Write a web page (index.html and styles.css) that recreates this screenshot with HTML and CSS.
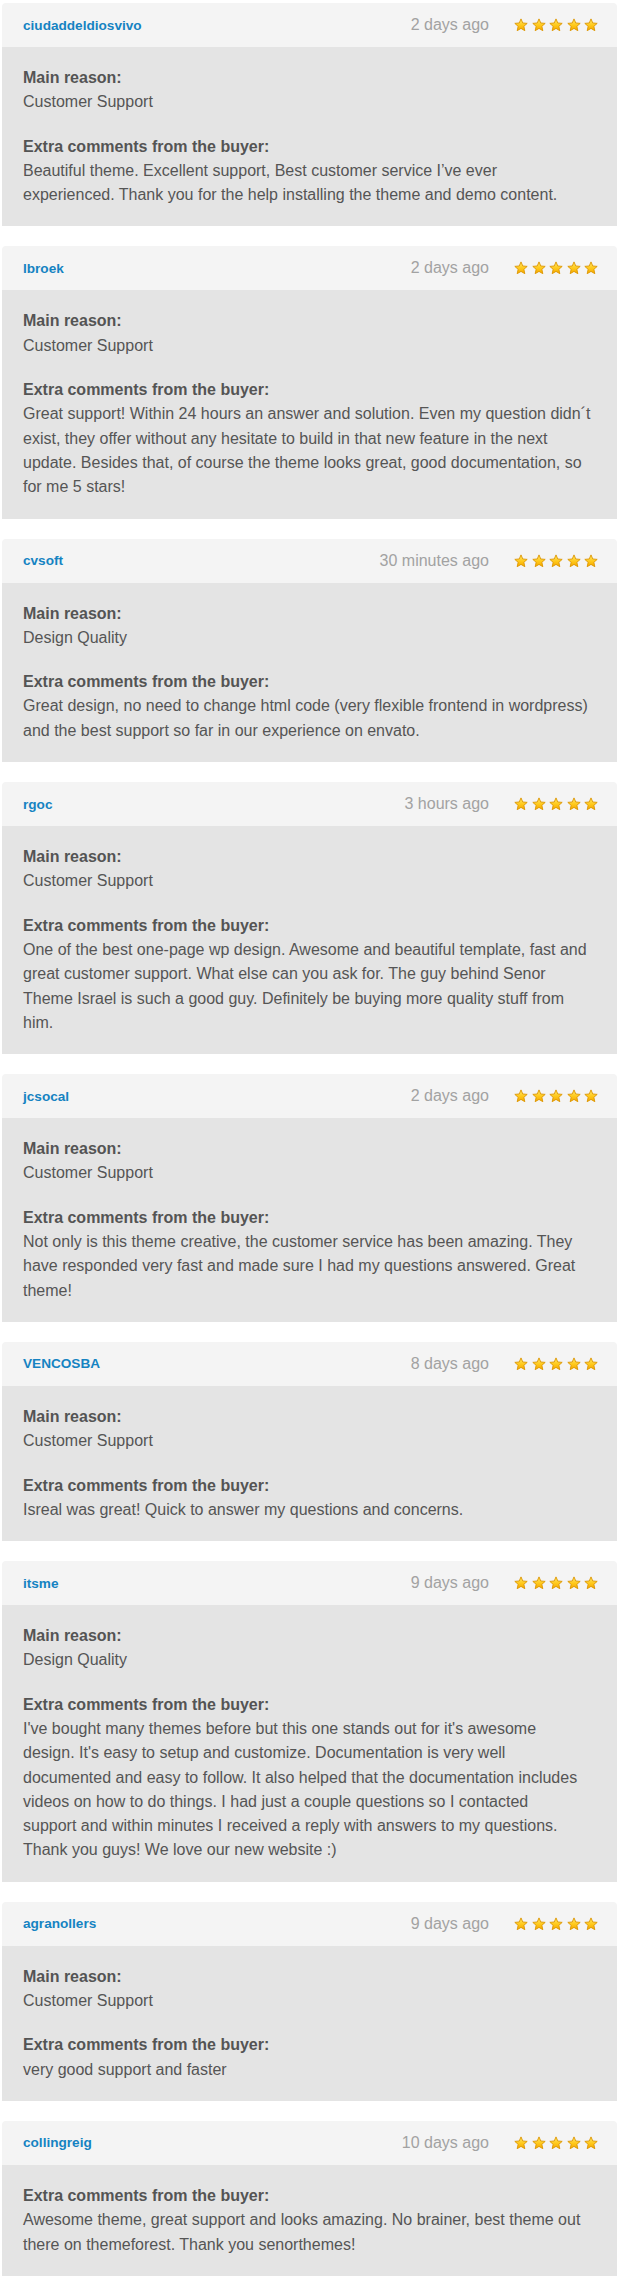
FILE: index.html
```html
<!DOCTYPE html>
<html lang="en">
<head>
<meta charset="utf-8">
<title>Reviews</title>
<link rel="stylesheet" href="styles.css">
</head>
<body>
<svg class="defs" width="0" height="0" aria-hidden="true">
  <defs>
    <linearGradient id="starfill" x1="0" y1="0" x2="0" y2="1">
      <stop offset="0" stop-color="#ffe866"/>
      <stop offset="0.55" stop-color="#ffc81a"/>
      <stop offset="1" stop-color="#f5a800"/>
    </linearGradient>
    <symbol id="star" viewBox="0 0 14 14">
      <path d="M7 0.9 L8.76 4.97 L13.18 5.39 L9.85 8.33 L10.82 12.66 L7 10.4 L3.18 12.66 L4.15 8.33 L0.82 5.39 L5.24 4.97 Z" fill="url(#starfill)" stroke="#dc9500" stroke-width="0.9" stroke-linejoin="round"/>
    </symbol>
  </defs>
</svg>

<main class="reviews">

  <article class="review">
    <header class="review-head">
      <a class="user">ciudaddeldiosvivo</a>
      <span class="date">2 days ago</span>
      <span class="stars"><svg class="star"><use href="#star"/></svg><svg class="star"><use href="#star"/></svg><svg class="star"><use href="#star"/></svg><svg class="star"><use href="#star"/></svg><svg class="star"><use href="#star"/></svg></span>
    </header>
    <div class="review-body">
      <div class="block">
        <div class="label">Main reason:</div>
        <div class="text">Customer Support</div>
      </div>
      <div class="block">
        <div class="label">Extra comments from the buyer:</div>
        <div class="text">Beautiful theme. Excellent support, Best customer service I’ve ever<br>experienced. Thank you for the help installing the theme and demo content.</div>
      </div>
    </div>
  </article>

  <article class="review">
    <header class="review-head">
      <a class="user">lbroek</a>
      <span class="date">2 days ago</span>
      <span class="stars"><svg class="star"><use href="#star"/></svg><svg class="star"><use href="#star"/></svg><svg class="star"><use href="#star"/></svg><svg class="star"><use href="#star"/></svg><svg class="star"><use href="#star"/></svg></span>
    </header>
    <div class="review-body">
      <div class="block">
        <div class="label">Main reason:</div>
        <div class="text">Customer Support</div>
      </div>
      <div class="block">
        <div class="label">Extra comments from the buyer:</div>
        <div class="text">Great support! Within 24 hours an answer and solution. Even my question didn´t<br>exist, they offer without any hesitate to build in that new feature in the next<br>update. Besides that, of course the theme looks great, good documentation, so<br>for me 5 stars!</div>
      </div>
    </div>
  </article>

  <article class="review">
    <header class="review-head">
      <a class="user">cvsoft</a>
      <span class="date">30 minutes ago</span>
      <span class="stars"><svg class="star"><use href="#star"/></svg><svg class="star"><use href="#star"/></svg><svg class="star"><use href="#star"/></svg><svg class="star"><use href="#star"/></svg><svg class="star"><use href="#star"/></svg></span>
    </header>
    <div class="review-body">
      <div class="block">
        <div class="label">Main reason:</div>
        <div class="text">Design Quality</div>
      </div>
      <div class="block">
        <div class="label">Extra comments from the buyer:</div>
        <div class="text">Great design, no need to change html code (very flexible frontend in wordpress)<br>and the best support so far in our experience on envato.</div>
      </div>
    </div>
  </article>

  <article class="review">
    <header class="review-head">
      <a class="user">rgoc</a>
      <span class="date">3 hours ago</span>
      <span class="stars"><svg class="star"><use href="#star"/></svg><svg class="star"><use href="#star"/></svg><svg class="star"><use href="#star"/></svg><svg class="star"><use href="#star"/></svg><svg class="star"><use href="#star"/></svg></span>
    </header>
    <div class="review-body">
      <div class="block">
        <div class="label">Main reason:</div>
        <div class="text">Customer Support</div>
      </div>
      <div class="block">
        <div class="label">Extra comments from the buyer:</div>
        <div class="text">One of the best one-page wp design. Awesome and beautiful template, fast and<br>great customer support. What else can you ask for. The guy behind Senor<br>Theme Israel is such a good guy. Definitely be buying more quality stuff from<br>him.</div>
      </div>
    </div>
  </article>

  <article class="review">
    <header class="review-head">
      <a class="user">jcsocal</a>
      <span class="date">2 days ago</span>
      <span class="stars"><svg class="star"><use href="#star"/></svg><svg class="star"><use href="#star"/></svg><svg class="star"><use href="#star"/></svg><svg class="star"><use href="#star"/></svg><svg class="star"><use href="#star"/></svg></span>
    </header>
    <div class="review-body">
      <div class="block">
        <div class="label">Main reason:</div>
        <div class="text">Customer Support</div>
      </div>
      <div class="block">
        <div class="label">Extra comments from the buyer:</div>
        <div class="text">Not only is this theme creative, the customer service has been amazing. They<br>have responded very fast and made sure I had my questions answered. Great<br>theme!</div>
      </div>
    </div>
  </article>

  <article class="review">
    <header class="review-head">
      <a class="user">VENCOSBA</a>
      <span class="date">8 days ago</span>
      <span class="stars"><svg class="star"><use href="#star"/></svg><svg class="star"><use href="#star"/></svg><svg class="star"><use href="#star"/></svg><svg class="star"><use href="#star"/></svg><svg class="star"><use href="#star"/></svg></span>
    </header>
    <div class="review-body">
      <div class="block">
        <div class="label">Main reason:</div>
        <div class="text">Customer Support</div>
      </div>
      <div class="block">
        <div class="label">Extra comments from the buyer:</div>
        <div class="text">Isreal was great! Quick to answer my questions and concerns.</div>
      </div>
    </div>
  </article>

  <article class="review">
    <header class="review-head">
      <a class="user">itsme</a>
      <span class="date">9 days ago</span>
      <span class="stars"><svg class="star"><use href="#star"/></svg><svg class="star"><use href="#star"/></svg><svg class="star"><use href="#star"/></svg><svg class="star"><use href="#star"/></svg><svg class="star"><use href="#star"/></svg></span>
    </header>
    <div class="review-body">
      <div class="block">
        <div class="label">Main reason:</div>
        <div class="text">Design Quality</div>
      </div>
      <div class="block">
        <div class="label">Extra comments from the buyer:</div>
        <div class="text">I've bought many themes before but this one stands out for it's awesome<br>design. It's easy to setup and customize. Documentation is very well<br>documented and easy to follow. It also helped that the documentation includes<br>videos on how to do things. I had just a couple questions so I contacted<br>support and within minutes I received a reply with answers to my questions.<br>Thank you guys! We love our new website :)</div>
      </div>
    </div>
  </article>

  <article class="review">
    <header class="review-head">
      <a class="user">agranollers</a>
      <span class="date">9 days ago</span>
      <span class="stars"><svg class="star"><use href="#star"/></svg><svg class="star"><use href="#star"/></svg><svg class="star"><use href="#star"/></svg><svg class="star"><use href="#star"/></svg><svg class="star"><use href="#star"/></svg></span>
    </header>
    <div class="review-body">
      <div class="block">
        <div class="label">Main reason:</div>
        <div class="text">Customer Support</div>
      </div>
      <div class="block">
        <div class="label">Extra comments from the buyer:</div>
        <div class="text">very good support and faster</div>
      </div>
    </div>
  </article>

  <article class="review">
    <header class="review-head">
      <a class="user">collingreig</a>
      <span class="date">10 days ago</span>
      <span class="stars"><svg class="star"><use href="#star"/></svg><svg class="star"><use href="#star"/></svg><svg class="star"><use href="#star"/></svg><svg class="star"><use href="#star"/></svg><svg class="star"><use href="#star"/></svg></span>
    </header>
    <div class="review-body">
      <div class="block">
        <div class="label">Extra comments from the buyer:</div>
        <div class="text">Awesome theme, great support and looks amazing. No brainer, best theme out<br>there on themeforest. Thank you senorthemes!</div>
      </div>
    </div>
  </article>

</main>
</body>
</html>
```

FILE: styles.css
```css
html, body {
  margin: 0;
  padding: 0;
  background: #ffffff;
}

body {
  font-family: "Liberation Sans", Arial, Helvetica, sans-serif;
  color: #545454;
}

.defs {
  position: absolute;
  width: 0;
  height: 0;
  overflow: hidden;
}

.reviews {
  display: flex;
  flex-direction: column;
  gap: 20px;
  padding: 3px 3px 0 2px;
}

.review {
  display: flex;
  flex-direction: column;
}

.review-head {
  display: flex;
  align-items: center;
  height: 44px;
  padding: 0 19px 0 21px;
  background: #f4f4f4;
  border-radius: 4px 4px 0 0;
}

.user {
  flex: 1;
  font-size: 13.6px;
  font-weight: bold;
  color: #1583c2;
  text-decoration: none;
}

.date {
  font-size: 16px;
  color: #a2a2a2;
  margin-right: 25px;
}

.stars {
  display: flex;
  gap: 3.5px;
}

.star {
  width: 14px;
  height: 14px;
  display: block;
}

.review-body {
  background: #e4e4e4;
  padding: 19px 10px 19px 21px;
  display: flex;
  flex-direction: column;
  gap: 20px;
  font-size: 16px;
  line-height: 24.3px;
}

.label {
  font-weight: bold;
  color: #545454;
}

.text {
  color: #555555;
}
```
